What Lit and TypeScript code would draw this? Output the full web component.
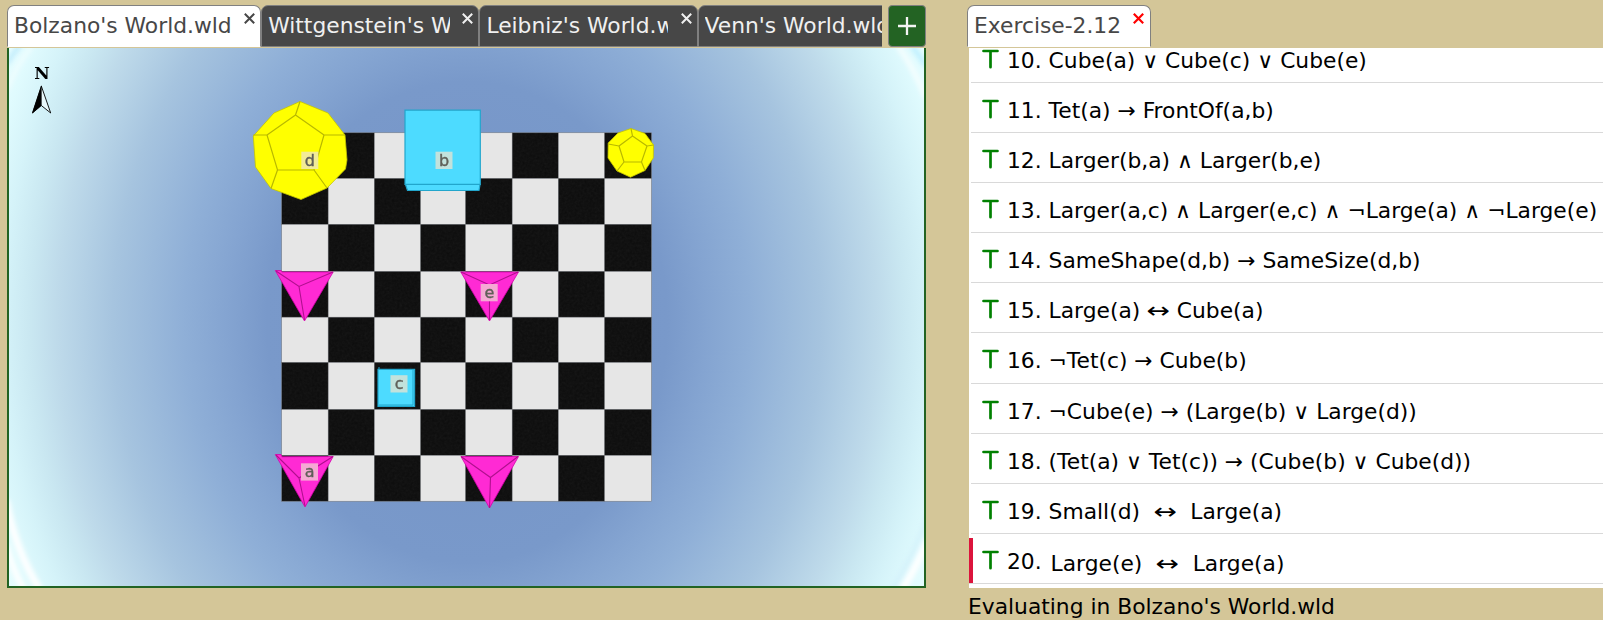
import { LitElement, html, svg, css } from "lit";
import { customElement } from "lit/decorators.js";
import { classMap } from "lit/directives/class-map.js";

interface Tab {
  title: string;
  kind: string;
}

const WORLD_TABS: Tab[] = [
  { title: "Bolzano's World.wld", kind: "active" },
  { title: "Wittgenstein's World.wld", kind: "" },
  { title: "Leibniz's World.wld", kind: "" },
  { title: "Venn's World.wld", kind: "last" },
];

const SENTENCES: [number, string][] = [
  [10, "Cube(a) ∨ Cube(c) ∨ Cube(e)"],
  [11, "Tet(a) → FrontOf(a,b)"],
  [12, "Larger(b,a) ∧ Larger(b,e)"],
  [13, "Larger(a,c) ∧ Larger(e,c) ∧ ¬Large(a) ∧ ¬Large(e)"],
  [14, "SameShape(d,b) → SameSize(d,b)"],
  [15, "Large(a) ↔ Cube(a)"],
  [16, "¬Tet(c) → Cube(b)"],
  [17, "¬Cube(e) → (Large(b) ∨ Large(d))"],
  [18, "(Tet(a) ∨ Tet(c)) → (Cube(b) ∨ Cube(d))"],
  [19, "Small(d)  ↔  Large(a)"],
  [20, "Large(e)  ↔  Large(a)"],
];

const COLS = [281.7, 328.2, 374.4, 420.7, 465.7, 512.2, 558.4, 604.7, 651.4];
const ROWS = [132.8, 178.5, 224.4, 271.5, 317.2, 362.5, 409.5, 455.4, 501.2];

@customElement("world-view")
class WorldView extends LitElement {
  static styles = css`
    :host { display: block; box-sizing: border-box; height: 540px; border: 2px solid #236323; border-top: 0; overflow: hidden; }
    svg { display: block; }
    .label { font: 16px "DejaVu Sans", sans-serif; fill: #5f5f58; stroke: #5f5f58; stroke-width: 0.4; text-anchor: middle; }
    .north { font: bold 17px "DejaVu Serif", serif; text-anchor: middle; }
    .dodec { fill: #ffff00; stroke: #c4c400; stroke-width: 0.8; stroke-linejoin: round; }
    .dodec-edge { fill: none; stroke: #b8b800; stroke-width: 1.2; }
    .cube { fill: #4ddbff; stroke: #22a6cc; stroke-width: 1.2; }
    .tet { fill: #ff2ad4; stroke: #d400aa; stroke-width: 0.8; }
    .tet-edge { fill: none; stroke: #b0108e; stroke-width: 1.1; }
  `;

  private board() {
    const cells = [];
    for (let r = 0; r < 8; r++) {
      for (let c = 0; c < 8; c++) {
        const dark = (r + c) % 2 === 1;
        cells.push(svg`<rect x=${COLS[c]} y=${ROWS[r]} width=${COLS[c + 1] - COLS[c]} height=${ROWS[r + 1] - ROWS[r]}
          fill=${dark ? "#0c0c0c" : "#e6e6e6"} stroke="#777" stroke-width="0.5"></rect>`);
        if (dark) {
          cells.push(svg`<rect x=${COLS[c] + 1} y=${ROWS[r] + 1} width=${COLS[c + 1] - COLS[c] - 2}
            height=${ROWS[r + 1] - ROWS[r] - 2} filter="url(#grain)" opacity="0.06"></rect>`);
        }
      }
    }
    return cells;
  }

  private label(x: number, y: number, name: string, fill: string) {
    return svg`<rect x=${x} y=${y} width="17" height="17.3" fill=${fill}></rect>
      <text class="label" x=${x + 8.6} y=${y + 14}>${name}</text>`;
  }

  render() {
    return html`
      <svg width="915" height="538" viewBox="9 48 915 538">
        <defs>
          <radialGradient id="sky" gradientUnits="userSpaceOnUse" cx="0" cy="0" r="1" gradientTransform="translate(467 322) scale(541 650)">
            <stop offset="0" stop-color="#7493c7"></stop>
            <stop offset="0.37" stop-color="#7999ca"></stop>
            <stop offset="0.443" stop-color="#84a4d1"></stop>
            <stop offset="0.523" stop-color="#8fafd7"></stop>
            <stop offset="0.655" stop-color="#a6c4df"></stop>
            <stop offset="0.758" stop-color="#bedaea"></stop>
            <stop offset="0.806" stop-color="#c9e7f1"></stop>
            <stop offset="0.858" stop-color="#d5f3f9"></stop>
            <stop offset="0.907" stop-color="#e0fbfe"></stop>
            <stop offset="0.962" stop-color="#eaffff"></stop>
          </radialGradient>
          <filter id="grain" x="0" y="0" width="1" height="1">
            <feTurbulence type="fractalNoise" baseFrequency="0.4" numOctaves="2"></feTurbulence>
            <feColorMatrix type="saturate" values="0"></feColorMatrix>
          </filter>
          <filter id="soft" x="-0.1" y="-0.1" width="1.2" height="1.2"><feGaussianBlur stdDeviation="2.6"></feGaussianBlur></filter>
        </defs>
        <rect x="9" y="48" width="915" height="538" fill="url(#sky)"></rect>
        <g fill="none" stroke="#ffffff" filter="url(#soft)">
          <path d="M7 64Q12 54 20 46" stroke="#aee2fa" stroke-width="3"></path>
          <path d="M7 90Q16 66 32 46" stroke-width="4" opacity=".5"></path>
          <path d="M898 46Q914 68 926 98" stroke-width="5" opacity=".7"></path>
          <path d="M912 46Q919 55 926 66" stroke="#b5ecff" stroke-width="4"></path>
          <path d="M6 500Q15 550 40 590" stroke-width="7"></path>
          <path d="M6 545Q13 570 24 590" stroke-width="6"></path>
          <path d="M928 515Q917 550 892 590" stroke="#d2f0fa" stroke-width="4"></path>
          <path d="M928 540Q917 566 902 590" stroke-width="7"></path>
        </g>
        <text class="north" x="42" y="78.600" textLength="15.500" lengthAdjust="spacingAndGlyphs">N</text>
        <path d="M41.3 86L50.7 113L41.3 105.5L32.5 113Z" fill="#e8f8fb" stroke="#000" stroke-width="0.9"></path>
        <path d="M41.6 85L41.6 105.5L32 113.5Z"></path>
        ${this.board()}
        <path class="dodec" d="M300 101.5L328 113L345 135L347 160L345.5 169L327 188L301 199.5L271 188.5L255.500 167L253.300 136L274 113Z"></path>
        <path class="dodec-edge" d="M295.500 115L324 135L314 170L277.500 170L267 135ZM300 101.500L295.500 115M345 135L324 135M327 188L314 170M271 188.500L277.500 170M253.300 135L267 135"></path>
        <path class="cube" d="M405.500 184.500L407.500 190.500L479 190.500L480 184.500Z"></path>
        <path class="cube" d="M405 110.200H480.300V184.300H405Z"></path>
        <path class="dodec" d="M631 128.500L645 133.500L653.500 145L653.300 158L645 170.500L630.500 177.200L617 171L608 158L608.200 143L618 133Z"></path>
        <path class="dodec-edge" d="M632.500 136L647 146L641.500 162L624 162L619 146ZM631 128.500L632.500 136M653.500 145L647 146M645 170.500L641.500 162M617 171L624 162M608.200 144L619 146"></path>
        <path class="tet" d="M275.300 270.500L281.200 270.500L282 272L333.200 272L304.500 321Z"></path>
        <path class="tet-edge" d="M276 271L299 286.500L333 272M299 286.500L304.500 320"></path>
        <path class="tet" d="M460.800 272L518.500 272L489.500 321Z"></path>
        <path class="tet-edge" d="M461 272L489.500 285L518 272M489.500 285V320"></path>
        <path class="tet" d="M275.300 454.500L281 454.500L282 456.800L333.200 456.500L305 507Z"></path>
        <path class="tet-edge" d="M276 455L299 478L333 456.500M299 478L305 506"></path>
        <path class="tet" d="M461 456.500L518.500 456.500L489.500 508Z"></path>
        <path class="tet-edge" d="M461 456.500L490.500 477.500L518 456.500M490.500 477.500L489.500 508"></path>
        <path class="cube" d="M378 369.300H414.600V406.300H378Z"></path>
        <path d="M413 370V405H379M379 367V370" fill="none" stroke="#22a6cc"></path>
        ${this.label(301.3, 151.7, "d", "#f2eb96")}
        ${this.label(435.500, 151.7, "b", "#c2e2dc")}
        ${this.label(480.700, 284, "e", "#f5a9d4")}
        ${this.label(390.500, 375.2, "c", "#c2e2dc")}
        ${this.label(301, 463.300, "a", "#f5a9d4")}
      </svg>
    `;
  }
}

@customElement("app-root")
class AppRoot extends LitElement {
  static styles = css`
    :host { display: block; box-sizing: border-box; width: 100%; height: 620px; overflow: hidden; background: #d4c698; font: 21.8px "DejaVu Sans", sans-serif; color: #000; }
    .page { display: grid; grid-template-columns: 919px 635px; column-gap: 42px; padding: 5px 0 0 7px; }
    .bar { display: flex; height: 43px; }
    .tabs { display: flex; width: 875.5px; overflow: hidden; }
    .tab { display: flex; box-sizing: border-box; flex: none; height: 42px; width: 218.2px; padding: 0 5px 0 6px; border: 1px solid #808080; border-radius: 7px 7px 0 0; background: #474747; color: #f0f0f0; justify-content: space-between; }
    .tab.active { width: 254.2px; background: #fff; color: #474747; border-bottom-color: #fff; }
    .tab.exercise { width: 184px; padding: 0 6px 0 6px; margin-left: -1px; }
    .title { width: 182px; overflow: hidden; white-space: nowrap; line-height: 39px; }
    .active .title { width: auto; overflow: visible; }
    .last .title { width: 200px; }
    .close { display: block; flex: none; width: 11px; height: 11px; margin-top: 7px; stroke: currentColor; stroke-width: 2; fill: none; }
    .exercise .close { stroke: #f00; stroke-width: 2.2; }
    .add { box-sizing: border-box; width: 38.5px; height: 42px; margin-left: 6px; padding: 0; border: 1px solid #808080; border-radius: 4px; background: #236323; display: grid; place-items: center; flex: none; }
    .sheet { height: 540px; background: #fff; overflow: hidden; margin-left: 1px; }
    .rows { margin: -15.1px 0 0; }
    .row { display: flex; box-sizing: border-box; height: 50.1px; border-bottom: 1px solid #d9d9d9; margin-left: 2px; }
    .row.current { margin-left: 0; padding-left: 2px; background: linear-gradient(#dc143c, #dc143c) 0 4px / 4px 46px no-repeat; }
    .verdict { flex: none; width: 17px; height: 20px; margin: 16px 8px 0 11px; stroke: #008000; fill: none; stroke-width: 2.7; stroke-linecap: round; }
    .formula { white-space: pre; line-height: 26px; padding-top: 15px; }
    .number { line-height: 26px; padding-top: 15px; white-space: pre; }
    .current .formula { padding: 17px 0 0 2px; }
    .iff { display: inline-block; transform: scaleX(1.28); margin: 0 2.2px; }
    .status { line-height: 26px; padding-top: 6px; }
  `;

  private tab(t: Tab, extra = "") {
    return html`<div class=${classMap({ tab: true, [t.kind || "idle"]: true, [extra || "world"]: true })}>
      <span class="title">${t.title}</span>
      ${t.kind === "last" ? "" : html`<svg class="close" viewBox="0 0 11 11"><path d="M.8 .8L10.200 10.200M10.200 .8L.8 10.200"></path></svg>`}
    </div>`;
  }

  private formula(text: string) {
    const [left, right] = text.split("↔");
    return right === undefined ? left : html`${left}<span class="iff">↔</span>${right}`;
  }

  render() {
    return html`
      <div class="page">
        <section>
          <div class="bar">
            <div class="tabs">${WORLD_TABS.map((t) => this.tab(t))}</div>
            <button class="add" aria-label="New world">
              <svg width="18" height="18" viewBox="0 0 18 18"><path d="M9 0V18M0 9H18" stroke="#f4f4f4" stroke-width="2.300"></path></svg>
            </button>
          </div>
          <world-view></world-view>
        </section>
        <section>
          <div class="bar">${this.tab({ title: "Exercise-2.12", kind: "active" }, "exercise")}</div>
          <div class="sheet">
            <div class="rows">
              ${SENTENCES.map(([n, text]) => html`<div class=${classMap({ row: true, current: n === 20 })}>
                <svg class="verdict" viewBox="0 0 17 20"><path d="M1.500 2H15.500M8.500 2V18.200"></path></svg>
                <span class="number">${n}. </span><span class="formula">${this.formula(text)}</span>
              </div>`)}
            </div>
          </div>
          <div class="status">Evaluating in Bolzano's World.wld</div>
        </section>
      </div>
    `;
  }
}
